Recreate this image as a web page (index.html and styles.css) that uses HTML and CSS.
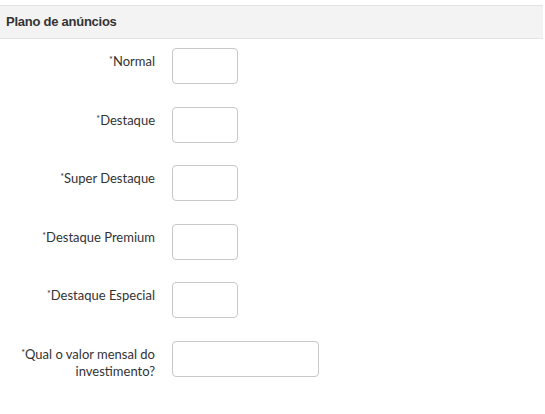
FILE: index.html
```html
<!DOCTYPE html>
<html lang="pt">
<head>
<meta charset="utf-8">
<link rel="stylesheet" href="styles.css">
</head>
<body>
<div class="panel">
  <div class="panel-heading">Plano de anúncios</div>
  <form class="form">
    <div class="row"><label class="lbl"><span class="req">*</span>Normal</label><input class="inp" type="text"></div>
    <div class="row"><label class="lbl"><span class="req">*</span>Destaque</label><input class="inp" type="text"></div>
    <div class="row"><label class="lbl"><span class="req">*</span>Super Destaque</label><input class="inp" type="text"></div>
    <div class="row"><label class="lbl"><span class="req">*</span>Destaque Premium</label><input class="inp" type="text"></div>
    <div class="row"><label class="lbl"><span class="req">*</span>Destaque Especial</label><input class="inp" type="text"></div>
    <div class="row"><label class="lbl"><span class="req">*</span>Qual o valor mensal do investimento?</label><input class="inp wide" type="text"></div>
  </form>
</div>
</body>
</html>
```
FILE: styles.css
```css
html, body {
  margin: 0;
  padding: 0;
  background: #fff;
}
.panel {
  padding-top: 5px;
  width: 543px;
}
.panel-heading {
  background: #f3f3f3;
  border-top: 1px solid #e3e3e3;
  border-bottom: 1px solid #e3e3e3;
  height: 32px;
  line-height: 32px;
  padding-left: 6px;
  font-family: "Liberation Sans", Arial, sans-serif;
  font-weight: bold;
  font-size: 13px;
  letter-spacing: -0.25px;
  color: #333;
}
.form {
  display: flex;
  flex-direction: column;
  gap: 22.6px;
  padding-top: 9px;
}
.row {
  display: flex;
  align-items: flex-start;
}
.lbl {
  width: 140px;
  margin-left: 15px;
  margin-right: 17px;
  text-align: right;
  font-family: Lato, "Liberation Sans", sans-serif;
  font-size: 13px;
  line-height: 17px;
  color: #333;
  padding-top: 5px;
}
.req {
  font-size: 9px;
  vertical-align: top;
  line-height: 13px;
}
.inp {
  box-sizing: border-box;
  width: 66px;
  height: 36px;
  border: 1px solid #c8c8c8;
  border-radius: 4px;
  margin: 0;
  padding: 4px 8px;
  background: #fff;
}
.wide {
  width: 147px;
}
```
